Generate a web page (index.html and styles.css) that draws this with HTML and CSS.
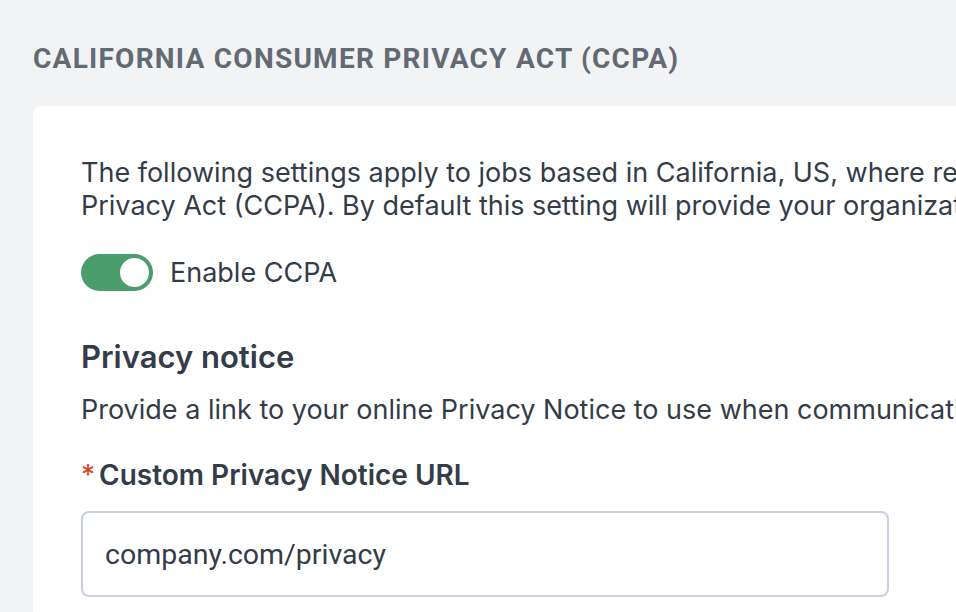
FILE: index.html
```html
<!DOCTYPE html>
<html>
<head>
<meta charset="utf-8">
<link rel="stylesheet" href="styles.css">
</head>
<body>
<main class="page">
  <h1 class="section-title">CALIFORNIA CONSUMER PRIVACY ACT (CCPA)</h1>
  <section class="card">
    <p class="intro">The following settings apply to jobs based in California, US, where residents are protected by the California Consumer<br>Privacy Act (CCPA). By default this setting will provide your organization with the standard privacy notice.</p>
    <label class="toggle-row">
      <span class="toggle"><span class="knob"></span></span>
      <span class="toggle-label">Enable CCPA</span>
    </label>
    <h2 class="sub-title">Privacy notice</h2>
    <p class="sub-text">Provide a link to your online Privacy Notice to use when communicating with candidates about their data.</p>
    <div class="field">
      <div class="field-label"><span class="req">*</span>Custom Privacy Notice URL</div>
      <div class="input">company.com/privacy</div>
    </div>
  </section>
</main>
</body>
</html>
```
FILE: styles.css
```css
html, body {
  margin: 0;
  padding: 0;
  background: #f2f3f5;
  overflow: hidden;
  width: 956px;
  height: 612px;
}
.page {
  padding: 0 0 0 33px;
  width: 1800px;
}
.section-title {
  margin: 0;
  padding-top: 43px;
  font-family: Roboto, "Liberation Sans", sans-serif;
  font-weight: 700;
  font-size: 28px;
  line-height: 32px;
  color: #636a73;
  letter-spacing: 1.25px;
}
.card {
  margin-top: 31px;
  background: #fff;
  border-radius: 8px;
  padding: 50px 48px 40px;
  width: 1600px;
  font-family: Inter, "Noto Sans", sans-serif;
  color: #333c48;
}
.intro {
  margin: 0;
  font-size: 27px;
  line-height: 33px;
  white-space: nowrap;
}
.toggle-row {
  display: flex;
  align-items: center;
  gap: 17px;
  margin-top: 32px;
}
.toggle {
  width: 72px;
  height: 37px;
  border-radius: 19px;
  background: #4a9e6b;
  display: flex;
  align-items: center;
  justify-content: flex-end;
  padding: 0 4px;
  box-sizing: border-box;
}
.knob {
  width: 29px;
  height: 29px;
  border-radius: 50%;
  background: #fff;
}
.toggle-label {
  font-size: 27px;
}
.sub-title {
  margin: 48px 0 0;
  font-size: 31px;
  line-height: 36px;
  font-weight: 600;
}
.sub-text {
  margin: 18px 0 0;
  font-size: 27px;
  line-height: 33px;
  white-space: nowrap;
}
.field {
  margin-top: 32px;
}
.field-label {
  font-size: 28px;
  line-height: 34px;
  font-weight: 600;
  display: flex;
  align-items: center;
}
.req {
  color: #d6432c;
  margin-right: 4px;
  font-weight: 400;
}
.input {
  margin-top: 19px;
  width: 808px;
  height: 86px;
  box-sizing: border-box;
  border: 2px solid #c8d0dc;
  border-radius: 8px;
  padding: 0 22px;
  display: flex;
  align-items: center;
  font-family: Roboto, "Liberation Sans", sans-serif;
  font-size: 28.5px;
  color: #333c48;
}
```
